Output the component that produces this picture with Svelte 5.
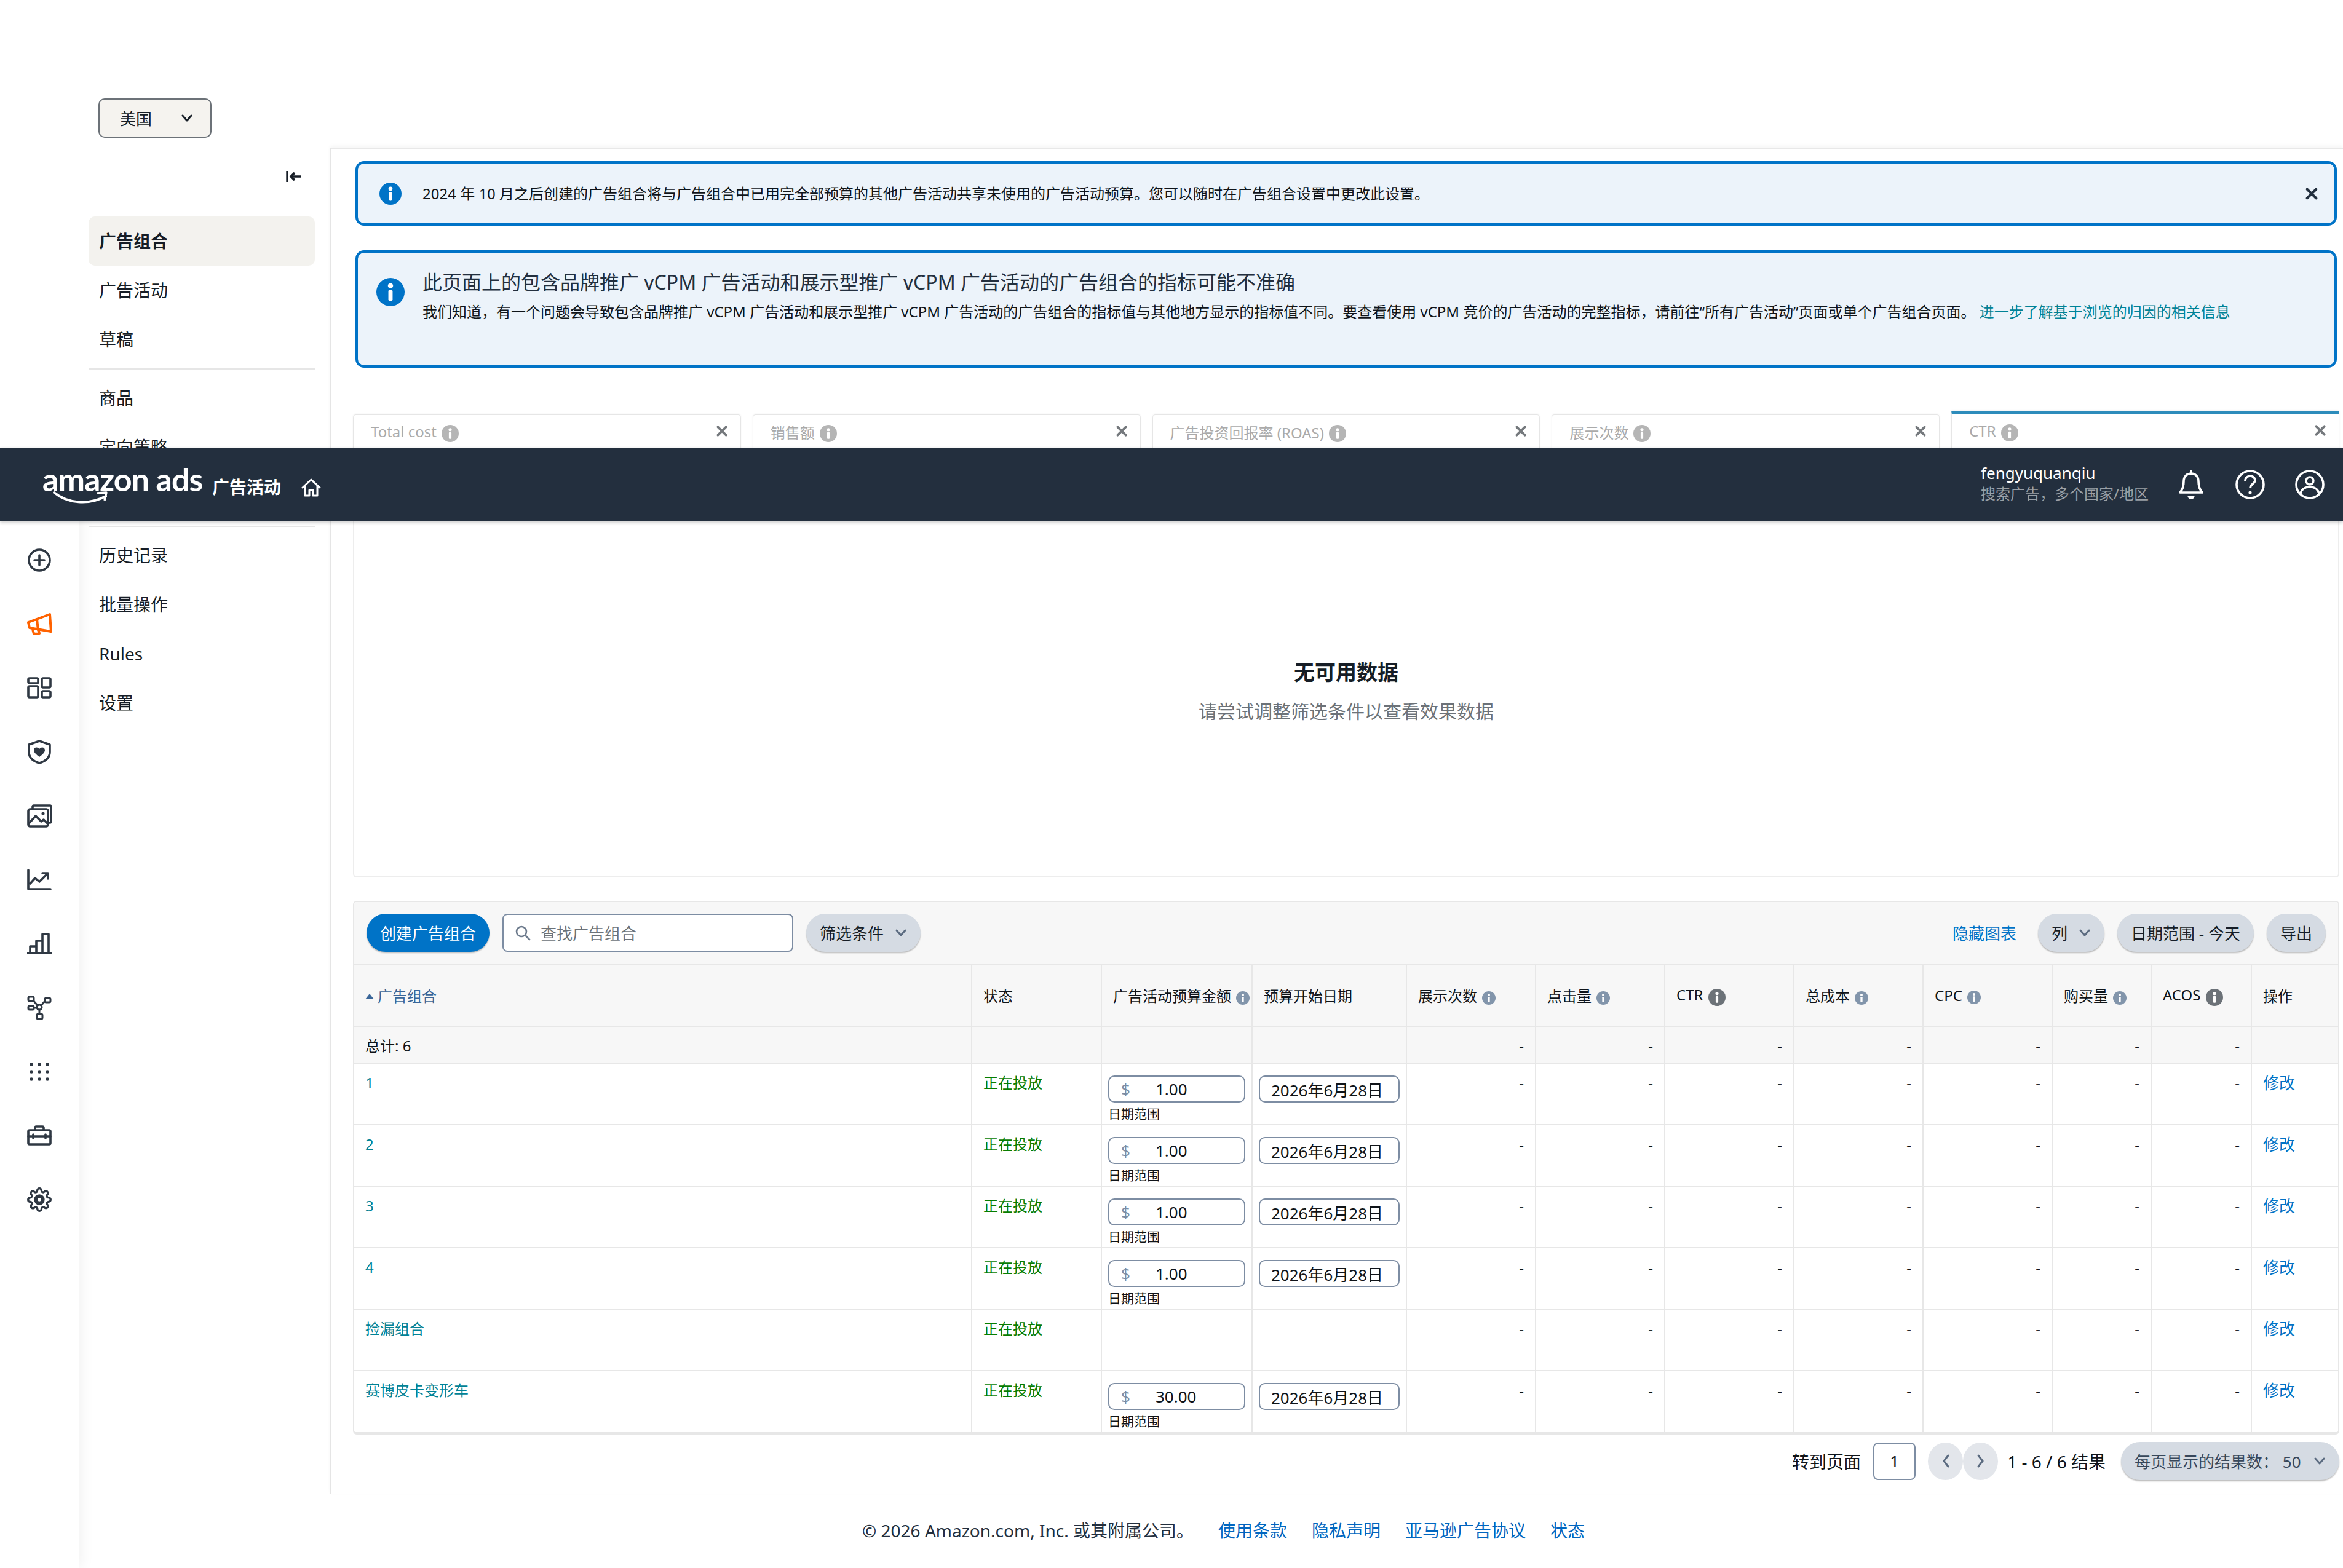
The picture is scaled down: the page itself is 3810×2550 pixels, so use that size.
<script lang="ts">
  const navTop = [
    { label: '广告组合', active: true },
    { label: '广告活动' },
    { label: '草稿' }
  ];
  const navBottom = ['历史记录', '批量操作', 'Rules', '设置'];

  const tabs = [
    { label: 'Total cost' },
    { label: '销售额' },
    { label: '广告投资回报率 (ROAS)' },
    { label: '展示次数' },
    { label: 'CTR', active: true }
  ];

  const columns = [
    { label: '状态', width: 211 },
    { label: '广告活动预算金额', width: 245, info: true },
    { label: '预算开始日期', width: 251 },
    { label: '展示次数', width: 210, info: true },
    { label: '点击量', width: 210, info: true },
    { label: 'CTR', width: 210, info: true, big: true },
    { label: '总成本', width: 210, info: true },
    { label: 'CPC', width: 210, info: true },
    { label: '购买量', width: 161, info: true },
    { label: 'ACOS', width: 163, info: true, big: true },
    { label: '操作', width: 141 }
  ];
  const metrics = [0, 1, 2, 3, 4, 5];

  const rows = [
    { name: '1', budget: '1.00' },
    { name: '2', budget: '1.00' },
    { name: '3', budget: '1.00' },
    { name: '4', budget: '1.00' },
    { name: '捡漏组合', budget: null },
    { name: '赛博皮卡变形车', budget: '30.00' }
  ];
</script>

{#snippet info(size, cls = '')}
  <svg class="info {cls}" width={size} height={size} viewBox="0 0 24 24">
    <circle cx="12" cy="12" r="12" fill="currentColor" />
    <circle cx="12" cy="6.6" r="2.2" fill="#fff" />
    <rect x="10.2" y="10" width="3.6" height="9.6" rx="1.2" fill="#fff" />
  </svg>
{/snippet}

{#snippet close(size, cls = '')}
  <svg class="close {cls}" width={size} height={size} viewBox="0 0 18 18">
    <path d="M3 3l12 12M15 3L3 15" fill="none" stroke="currentColor" stroke-width="3.4" stroke-linecap="round" />
  </svg>
{/snippet}

{#snippet chevron(cls = '')}
  <svg class="chev {cls}" width="20" height="14" viewBox="0 0 20 14">
    <path d="M3 3l7 8 7-8" fill="none" stroke="currentColor" stroke-width="3" stroke-linecap="round" stroke-linejoin="round" />
  </svg>
{/snippet}

<div class="shell">
  <aside class="rail">
    <svg class="r" viewBox="0 0 40 36"><circle cx="20" cy="18" r="17" /><path d="M20 10v16M12 18h16" /></svg>
    <svg class="r orange" viewBox="0 0 40 36"><path d="M2 15L37 2l2 28-35-6zM16 10l2 18M9 26l2 8 9-1-1-4" /></svg>
    <svg class="r" viewBox="0 0 40 36"><rect x="2" y="2" width="16" height="8" rx="2" /><rect x="24" y="2" width="14" height="15" rx="2" /><rect x="2" y="15" width="16" height="18" rx="2" /><rect x="24" y="23" width="14" height="10" rx="2" /></svg>
    <svg class="r" viewBox="0 0 40 40"><path d="M20 2l17 6v12c0 9-7 15-17 18C10 35 3 29 3 20V8z" /><path class="fill" d="M20 28c-5-4-9-7-9-11 0-5 6-6 9-2 3-4 9-3 9 2 0 4-4 7-9 11z" /></svg>
    <svg class="r" viewBox="0 0 40 38"><path d="M9 7V4a2 2 0 012-2h26a2 2 0 012 2v24a2 2 0 01-2 2h-3" /><rect x="2" y="8" width="32" height="28" rx="3" /><path d="M3 31l11-12 9 9 4-3 6 6" /><circle class="fill" cx="26" cy="15" r="2.6" /></svg>
    <svg class="r" viewBox="0 0 40 36"><path d="M2 2v31h36M5 24l8-9 7 6 13-13M25 7h9v9" /></svg>
    <svg class="r" viewBox="0 0 40 36"><path d="M1 33h38M5 33V22h10v11M15 33V13h10v20M25 33V2h10v31" /></svg>
    <svg class="r thin" viewBox="0 0 40 40"><rect x="2" y="2" width="9" height="7" rx="2" /><rect x="29" y="4" width="9" height="7" rx="2" /><rect x="2" y="17" width="9" height="6" rx="2" /><rect x="16" y="30" width="9" height="8" rx="2" /><circle cx="20" cy="19" r="4" /><path d="M10 8l7 8M29 9l-6 7M11 20h5M20 23v7" /></svg>
    <svg class="r dots" viewBox="0 0 40 36">
      {#each [6, 18, 30] as y}
        {#each [7, 20, 33] as x}
          <circle cx={x} cy={y} r="2.8" />
        {/each}
      {/each}
    </svg>
    <svg class="r" viewBox="0 0 40 36"><rect x="2" y="9" width="36" height="23" rx="2" /><path d="M13 9V5a2 2 0 012-2h10a2 2 0 012 2v4M2 19h36M10 16v6M30 16v6" /></svg>
    <svg class="r" viewBox="0 0 24 24"><circle cx="12" cy="12" r="3.4" /><path class="gear" d="M19.4 15a1.65 1.65 0 0 0 .33 1.82l.06.06a2 2 0 0 1 0 2.83 2 2 0 0 1-2.83 0l-.06-.06a1.65 1.65 0 0 0-1.82-.33 1.65 1.65 0 0 0-1 1.51V21a2 2 0 0 1-2 2 2 2 0 0 1-2-2v-.09A1.65 1.65 0 0 0 9 19.4a1.65 1.65 0 0 0-1.82.33l-.06.06a2 2 0 0 1-2.83 0 2 2 0 0 1 0-2.83l.06-.06a1.65 1.65 0 0 0 .33-1.82 1.65 1.65 0 0 0-1.51-1H3a2 2 0 0 1-2-2 2 2 0 0 1 2-2h.09A1.65 1.65 0 0 0 4.6 9a1.65 1.65 0 0 0-.33-1.82l-.06-.06a2 2 0 0 1 0-2.83 2 2 0 0 1 2.83 0l.06.06a1.65 1.65 0 0 0 1.82.33H9a1.65 1.65 0 0 0 1-1.51V3a2 2 0 0 1 2-2 2 2 0 0 1 2 2v.09a1.65 1.65 0 0 0 1 1.51 1.65 1.65 0 0 0 1.82-.33l.06-.06a2 2 0 0 1 2.83 0 2 2 0 0 1 0 2.83l-.06.06a1.65 1.65 0 0 0-.33 1.82V9a1.65 1.65 0 0 0 1.51 1H21a2 2 0 0 1 2 2 2 2 0 0 1-2 2h-.09a1.65 1.65 0 0 0-1.51 1z" /></svg>
  </aside>

  <nav class="subnav">
    <button class="country">美国 {@render chevron()}</button>
    <div class="collapse">
      <svg width="26" height="20" viewBox="0 0 26 20"><path d="M2 1v18M24 10H9M14 4l-6 6 6 6" fill="none" stroke="#161d26" stroke-width="3.4" /></svg>
    </div>
    {#each navTop as item}
      <div class="nav-item" class:active={item.active}>{item.label}</div>
    {/each}
    <div class="nav-sep top"></div>
    <div class="nav-item">商品</div>
    <div class="nav-item">定向策略</div>
    <div class="nav-sep bottom"></div>
    {#each navBottom as label}
      <div class="nav-item">{label}</div>
    {/each}
  </nav>

  <div class="column">
    <main class="main">
      <div class="alert one">
        {@render info(36, 'alert-icon')}
        <p>2024 年 10 月之后创建的广告组合将与广告组合中已用完全部预算的其他广告活动共享未使用的广告活动预算。您可以随时在广告组合设置中更改此设置。</p>
        {@render close(22, 'alert-close')}
      </div>
      <div class="alert two">
        {@render info(46, 'alert-icon')}
        <div>
          <h3>此页面上的包含品牌推广 vCPM 广告活动和展示型推广 vCPM 广告活动的广告组合的指标可能不准确</h3>
          <p>我们知道，有一个问题会导致包含品牌推广 vCPM 广告活动和展示型推广 vCPM 广告活动的广告组合的指标值与其他地方显示的指标值不同。要查看使用 vCPM 竞价的广告活动的完整指标，请前往“所有广告活动”页面或单个广告组合页面。 <a href="#top">进一步了解基于浏览的归因的相关信息</a></p>
        </div>
      </div>

      <div class="tabs">
        {#each tabs as tab}
          <div class="tab" class:active={tab.active}>
            <span>{tab.label}</span>
            {@render info(28, 'serif')}
            {@render close(20, 'tab-close')}
          </div>
        {/each}
      </div>
      <div class="chart">
        <strong>无可用数据</strong>
        <span>请尝试调整筛选条件以查看效果数据</span>
      </div>

      <section class="card">
        <div class="toolbar">
          <button class="pill primary">创建广告组合</button>
          <div class="search">
            <svg width="26" height="26" viewBox="0 0 26 26"><circle cx="11" cy="11" r="8" fill="none" stroke="#6c7a8c" stroke-width="2.6" /><path d="M17 17l7 7" stroke="#6c7a8c" stroke-width="2.8" stroke-linecap="round" /></svg>
            <span>查找广告组合</span>
          </div>
          <button class="pill">筛选条件 {@render chevron()}</button>
          <a class="hide-chart" href="#top">隐藏图表</a>
          <button class="pill">列 {@render chevron()}</button>
          <button class="pill">日期范围 - 今天</button>
          <button class="pill">导出</button>
        </div>

        <table>
          <colgroup>
            <col />
            {#each columns as c}
              <col style="width: {c.width}px" />
            {/each}
          </colgroup>
          <thead>
            <tr>
              <th class="sort"><i></i>广告组合</th>
              {#each columns as c}
                <th>
                  {c.label}
                  {#if c.info}
                    {@render info(c.big ? 28 : 22, c.big ? 'dark' : 'blue')}
                  {/if}
                </th>
              {/each}
            </tr>
            <tr class="total">
              <td>总计: 6</td>
              <td></td><td></td><td></td>
              <td class="num">-</td><td class="num">-</td><td class="num">-</td>
              <td class="num">-</td><td class="num">-</td><td class="num">-</td><td class="num">-</td>
              <td></td>
            </tr>
          </thead>
          <tbody>
            {#each rows as row}
              <tr>
                <td class="name">{row.name}</td>
                <td class="status">正在投放</td>
                <td class="field">
                  {#if row.budget}
                    <div class="input budget"><span>$</span>{row.budget}</div>
                    <div class="hint">日期范围</div>
                  {/if}
                </td>
                <td class="field">
                  {#if row.budget}
                    <div class="input date">2026年6月28日</div>
                  {/if}
                </td>
                <td class="num">-</td>
                {#each metrics as m (m)}
                  <td class="num">-</td>
                {/each}
                <td class="edit"><a href="#top">修改</a></td>
              </tr>
            {/each}
          </tbody>
        </table>
      </section>

      <div class="pager">
        <span>转到页面</span>
        <div class="page-box">1</div>
        <div class="arrows">
          <button aria-label="上一页"><svg width="14" height="24" viewBox="0 0 14 24"><path d="M11 3l-7 9 7 9" fill="none" stroke="#5b6b80" stroke-width="3" stroke-linecap="round" /></svg></button>
          <button aria-label="下一页"><svg width="14" height="24" viewBox="0 0 14 24"><path d="M3 3l7 9-7 9" fill="none" stroke="#5b6b80" stroke-width="3" stroke-linecap="round" /></svg></button>
        </div>
        <span class="count">1 - 6 / 6 结果</span>
        <button class="pill per-page">每页显示的结果数： 50 {@render chevron()}</button>
      </div>
    </main>

    <footer class="footer">
      <span>© 2026 Amazon.com, Inc. 或其附属公司。</span>
      <a href="#top">使用条款</a>
      <a href="#top">隐私声明</a>
      <a href="#top">亚马逊广告协议</a>
      <a href="#top">状态</a>
    </footer>
  </div>

  <header class="topbar">
    <div class="logo">
      <span>amazon ads</span>
      <svg width="92" height="26" viewBox="0 0 92 26"><path d="M2 3c22 18 56 21 84 6" fill="none" stroke="#fff" stroke-width="4" stroke-linecap="round" /><path d="M72 4l15-1-3 13" fill="none" stroke="#fff" stroke-width="3.4" stroke-linejoin="round" /></svg>
    </div>
    <span class="section">广告活动</span>
    <svg class="home" width="32" height="30" viewBox="0 0 32 30"><path d="M2 15L16 2l14 13M6 12v16h7v-9h6v9h7V12" fill="none" stroke="#fff" stroke-width="3" stroke-linejoin="round" stroke-linecap="round" /></svg>
    <div class="account">
      <div class="acct-name">fengyuquanqiu</div>
      <div class="acct-sub">搜索广告，多个国家/地区</div>
    </div>
    <div class="top-icons">
      <svg width="46" height="48" viewBox="0 0 46 48"><path d="M23 1v6M5 37c5-6 6-11 6-18 0-8 5-13 12-13s12 5 12 13c0 7 1 12 6 18z" fill="none" stroke="#fff" stroke-width="3.6" stroke-linejoin="round" stroke-linecap="round" /><path d="M17 42h12c-1 4-3 6-6 6s-5-2-6-6z" fill="#fff" /></svg>
      <svg width="48" height="48" viewBox="0 0 48 48"><circle cx="24" cy="24" r="22" fill="none" stroke="#fff" stroke-width="3.6" /><path d="M16 18c0-5 4-8 8-8s8 3 8 7c0 6-8 6-8 13" fill="none" stroke="#fff" stroke-width="3.6" /><circle cx="24" cy="37" r="2.6" fill="#fff" /></svg>
      <svg width="48" height="48" viewBox="0 0 48 48"><circle cx="24" cy="24" r="22" fill="none" stroke="#fff" stroke-width="3.6" /><circle cx="24" cy="18" r="6" fill="none" stroke="#fff" stroke-width="3.4" /><path d="M9 39c1-7 7-11 15-11s14 4 15 11" fill="none" stroke="#fff" stroke-width="3.4" /></svg>
    </div>
  </header>
</div>

<style>
  :global(body) {
    margin: 0;
    background: #fff;
  }

  .shell {
    position: relative;
    display: flex;
    width: 3810px;
    height: 2550px;
    overflow: hidden;
    font-family: "Noto Sans", "Noto Sans CJK SC", sans-serif;
    font-size: 24px;
    color: #0f1419;
  }

  /* icon rail */
  .rail {
    flex: none;
    width: 128px;
    box-sizing: border-box;
    padding-top: 890px;
    display: flex;
    flex-direction: column;
    align-items: center;
    gap: 62px;
    box-shadow: 4px 0 22px rgba(0, 0, 0, 0.06);
    clip-path: inset(848px -40px 0 0);
  }

  .r {
    width: 40px;
    height: 42px;
    fill: none;
    stroke: #2f3843;
    stroke-width: 3.6;
    stroke-linejoin: round;
    stroke-linecap: round;
  }

  .r.orange {
    stroke: #ff6200;
    stroke-width: 4;
  }

  .r.thin {
    stroke-width: 3;
  }

  .r.dots {
    fill: #2f3843;
    stroke: none;
  }

  .r .fill {
    fill: #2f3843;
    stroke: none;
  }

  .r .gear {
    stroke-width: 2;
  }

  .r circle,
  .r .gear {
    vector-effect: none;
  }

  /* secondary nav */
  .subnav {
    flex: none;
    width: 409px;
    box-sizing: border-box;
    padding: 160px 25px 0 16px;
    font-size: 28px;
    color: #161d26;
  }

  .country {
    display: flex;
    align-items: center;
    justify-content: space-between;
    width: 184px;
    height: 64px;
    margin-left: 16px;
    padding: 0 28px 0 33px;
    box-sizing: border-box;
    background: #f5f3ef;
    border: 2px solid #6c7278;
    border-radius: 10px;
    font: inherit;
    font-size: 26px;
    color: #161d26;
  }

  .country .chev {
    color: #161d26;
  }

  .collapse {
    display: flex;
    justify-content: flex-end;
    align-items: center;
    height: 128px;
    padding-right: 21px;
    box-sizing: border-box;
    padding-bottom: 2px;
  }

  .nav-item {
    height: 80px;
    line-height: 80px;
    padding-left: 17px;
    border-radius: 10px;
  }

  .nav-item.active {
    background: #f3f2ee;
    font-weight: 700;
  }

  .nav-sep {
    height: 2px;
    background: #e6e6e6;
  }

  .nav-sep.top {
    margin: 7px 0 6px;
  }

  .nav-sep.bottom {
    margin: 88px 0 6px;
  }

  /* main column */
  .column {
    flex: 1;
    min-width: 0;
    margin-top: 240px;
  }

  .main {
    height: 2190px;
    box-sizing: border-box;
    padding: 20px 6px 0 35px;
    border-left: 2px solid #e5e5e5;
    border-top: 2px solid #e8e8e8;
    box-shadow: 0 -3px 6px rgba(0, 0, 0, 0.04);
  }

  .main > * {
    box-sizing: border-box;
  }

  .alert {
    display: flex;
    margin: 0 4px 40px;
    background: #ecf3fa;
    border: 4px solid #0073c7;
    border-radius: 14px;
    color: #0f1419;
  }

  .alert p {
    margin: 0;
    font-size: 24px;
    line-height: 37px;
  }

  .alert :global(.alert-icon) {
    flex: none;
    color: #0073c7;
  }

  .alert.one {
    height: 105px;
    align-items: center;
    padding: 0 26px 0 35px;
  }

  .alert.one :global(.alert-icon) {
    margin-right: 34px;
  }

  .alert.one :global(.alert-close) {
    margin-left: auto;
    color: #232f3e;
  }

  .alert.two {
    height: 191px;
    padding: 27px 30px 0 30px;
  }

  .alert.two :global(.alert-icon) {
    margin: 14px 29px 0 0;
  }

  .alert h3 {
    margin: 0 0 8px;
    font-size: 32px;
    line-height: 42px;
    font-weight: 400;
    color: #232f3e;
  }

  .alert a {
    color: #008296;
    text-decoration: none;
  }

  .tabs {
    display: flex;
    gap: 19px;
    height: 90px;
    margin-top: 76px;
  }

  .tab {
    flex: 1;
    display: flex;
    align-items: flex-start;
    gap: 8px;
    padding: 10px 20px 0 28px;
    background: #fff;
    border: 1px solid #e6e6e6;
    border-bottom: 0;
    border-radius: 5px 5px 0 0;
    box-shadow: 0 -1px 3px rgba(0, 0, 0, 0.05);
    color: #aaa;
    font-size: 24px;
  }

  .tab.active {
    margin-top: -6px;
    border-top: 6px solid #2d8cbb;
    border-radius: 0;
  }

  .tab :global(.info) {
    color: #b5b5b5;
    margin-top: 6px;
  }

  .tab :global(.tab-close) {
    margin: 6px 0 0 auto;
    color: #75797d;
  }

  .chart {
    display: flex;
    flex-direction: column;
    align-items: center;
    justify-content: center;
    gap: 22px;
    height: 663px;
    padding-top: 60px;
    border: 2px solid #ededed;
    border-top: 0;
    border-radius: 0 0 6px 6px;
  }

  .chart strong {
    font-size: 34px;
    line-height: 42px;
    color: #161d26;
  }

  .chart span {
    font-size: 30px;
    line-height: 42px;
    color: #6c7278;
  }

  /* table card */
  .card {
    margin-top: 38px;
    border: 2px solid #e7e7e7;
    border-bottom-width: 4px;
    border-radius: 6px;
    overflow: hidden;
  }

  .toolbar {
    display: flex;
    align-items: center;
    gap: 21px;
    height: 100px;
    padding: 0 20px;
    background: #f7f7f7;
    border-bottom: 2px solid #e7e7e7;
  }

  .pill {
    display: inline-flex;
    align-items: center;
    justify-content: space-between;
    gap: 18px;
    height: 62px;
    padding: 0 22px;
    border: 0;
    border-radius: 31px;
    background: #d5dbe3;
    box-shadow: 0 2px 2px rgba(0, 0, 0, 0.25);
    font: inherit;
    font-size: 26px;
    color: #161d26;
  }

  .pill :global(.chev) {
    color: #5b6b80;
  }

  .pill.primary {
    background: #0073c7;
    color: #fff;
  }

  .search {
    display: flex;
    align-items: center;
    gap: 16px;
    width: 473px;
    height: 62px;
    box-sizing: border-box;
    padding-left: 18px;
    background: #fff;
    border: 2px solid #7d8da3;
    border-radius: 8px;
    font-size: 26px;
    color: #6c7278;
  }

  .hide-chart {
    margin: 0 14px 0 auto;
    font-size: 26px;
    color: #0073c7;
    text-decoration: none;
  }

  table {
    width: 100%;
    table-layout: fixed;
    border-collapse: collapse;
  }

  th,
  td {
    border: 2px solid #e7e7e7;
    padding: 0 18px;
    font-weight: 400;
    text-align: left;
    white-space: nowrap;
    vertical-align: middle;
  }

  tr > :first-child {
    border-left: 0;
  }

  tr > :last-child {
    border-right: 0;
  }

  tbody tr:last-child td {
    border-bottom: 0;
  }

  thead tr:first-child th {
    border-top: 0;
  }

  thead {
    background: #f7f7f7;
  }

  thead tr:first-child {
    height: 100px;
  }

  thead :global(.info) {
    vertical-align: -5px;
    margin-left: 2px;
  }

  thead :global(.info.blue) {
    color: #8295ab;
  }

  thead :global(.info.dark) {
    color: #6c7278;
    vertical-align: -9px;
  }

  th.sort {
    color: #3a6699;
  }

  th.sort i {
    display: inline-block;
    width: 0;
    height: 0;
    margin-right: 6px;
    vertical-align: 4px;
    border-left: 7px solid transparent;
    border-right: 7px solid transparent;
    border-bottom: 9px solid #3a6699;
  }

  .total {
    height: 60px;
  }

  tbody tr {
    height: 100px;
  }

  tbody td {
    vertical-align: top;
    padding-top: 15px;
    line-height: 32px;
  }

  .num {
    text-align: right;
  }

  .name {
    color: #008296;
  }

  .status {
    color: #067d00;
  }

  tbody td.field {
    padding: 19px 10px 0;
  }

  .input {
    display: flex;
    align-items: center;
    height: 44px;
    box-sizing: border-box;
    border: 2px solid #7d8da3;
    border-radius: 10px;
    background: #fff;
    font-size: 26px;
  }

  .budget {
    padding-left: 19px;
  }

  .budget span {
    width: 56px;
    color: #7d8da3;
  }

  .date {
    padding: 4px 0 0 18px;
  }

  .hint {
    margin-top: 3px;
    font-size: 21px;
    line-height: 30px;
  }

  .edit a {
    font-size: 26px;
    color: #0073c7;
    text-decoration: none;
  }

  /* pagination */
  .pager {
    display: flex;
    align-items: center;
    justify-content: flex-end;
    margin-top: 12px;
    font-size: 28px;
  }

  .page-box {
    width: 69px;
    height: 61px;
    box-sizing: border-box;
    margin: 0 20px;
    text-align: center;
    line-height: 57px;
    border: 2px solid #7d8da3;
    border-radius: 8px;
    font-size: 26px;
  }

  .arrows {
    display: flex;
  }

  .arrows button {
    display: flex;
    align-items: center;
    justify-content: center;
    width: 57px;
    height: 61px;
    padding: 0;
    border: 0;
    border-radius: 50%;
    background: #e3e6eb;
  }

  .count {
    margin: 0 25px 0 15px;
  }

  .per-page {
    width: 355px;
    box-sizing: border-box;
    color: #37475a;
  }

  /* footer */
  .footer {
    display: flex;
    align-items: center;
    gap: 40px;
    height: 115px;
    padding-left: 865px;
    font-size: 28px;
    color: #232f3e;
    white-space: nowrap;
  }

  .footer a {
    color: #0066c0;
    text-decoration: none;
  }

  /* top bar sits over the page content */
  .topbar {
    position: absolute;
    top: 728px;
    left: 0;
    right: 0;
    height: 120px;
    display: flex;
    align-items: center;
    padding: 0 30px 0 69px;
    background: #232f3e;
    box-shadow: 0 2px 5px rgba(0, 0, 0, 0.2);
    color: #fff;
  }

  .logo {
    position: relative;
    width: 276px;
    margin-top: -18px;
    font-family: Lato, sans-serif;
    font-weight: 700;
    font-size: 52px;
    line-height: 60px;
    letter-spacing: -1px;
    white-space: nowrap;
  }

  .logo svg {
    position: absolute;
    left: 17px;
    top: 49px;
  }

  .section {
    font-size: 28px;
    font-weight: 700;
    margin-top: 6px;
  }

  .home {
    margin: 10px 0 0 33px;
  }

  .account {
    margin-left: auto;
    margin-right: 46px;
    line-height: 34px;
    margin-top: -4px;
  }

  .acct-name {
    font-size: 26px;
  }

  .acct-sub {
    font-size: 24px;
    color: #9aa0a6;
  }

  .top-icons {
    display: flex;
    gap: 49px;
  }
</style>
